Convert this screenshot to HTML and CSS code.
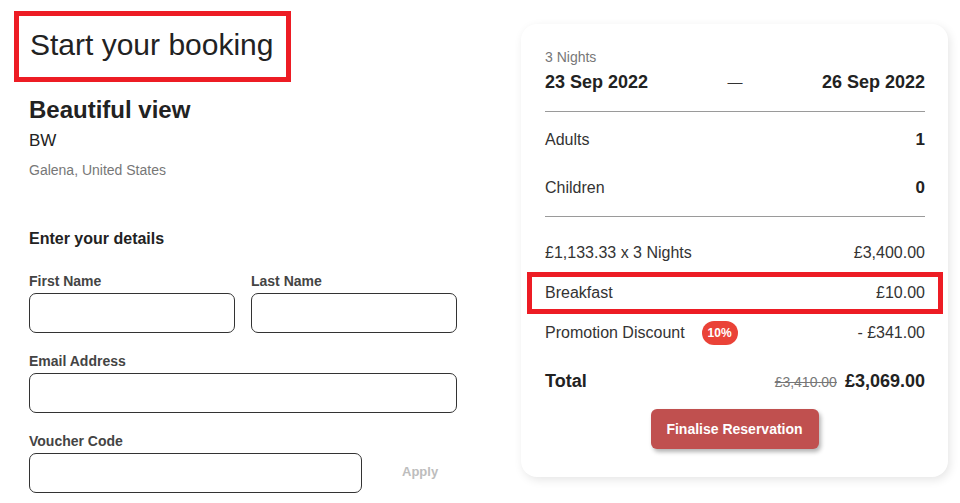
FILE: index.html
```html
<!DOCTYPE html>
<html lang="en">
<head>
<meta charset="utf-8">
<title>Start your booking</title>
<link rel="stylesheet" href="styles.css">
</head>
<body>
<div class="page">
  <div class="left">
    <h1 class="title-box">Start your booking</h1>
    <div class="details">
      <h2 class="prop-name">Beautiful view</h2>
      <div class="prop-code">BW</div>
      <div class="prop-loc">Galena, United States</div>

      <h3 class="section-title">Enter your details</h3>

      <div class="row-2">
        <div class="field">
          <label class="label">First Name</label>
          <input class="input" type="text">
        </div>
        <div class="field">
          <label class="label">Last Name</label>
          <input class="input" type="text">
        </div>
      </div>
      <div class="field">
        <label class="label">Email Address</label>
        <input class="input" type="text">
      </div>
      <div class="field">
        <label class="label">Voucher Code</label>
        <div class="voucher">
          <input class="input voucher-input" type="text">
          <button class="apply" type="button">Apply</button>
        </div>
      </div>
    </div>
  </div>

  <div class="card">
    <div class="nights">3 Nights</div>
    <div class="dates">
      <span>23 Sep 2022</span>
      <span class="dash">—</span>
      <span>26 Sep 2022</span>
    </div>
    <div class="divider"></div>
    <div class="guests">
      <div class="guest-row"><span>Adults</span><span class="strong">1</span></div>
      <div class="guest-row"><span>Children</span><span class="strong">0</span></div>
    </div>
    <div class="divider"></div>
    <div class="prices">
      <div class="price-row"><span>£1,133.33 x 3 Nights</span><span>£3,400.00</span></div>
      <div class="price-row highlight"><span>Breakfast</span><span>£10.00</span></div>
      <div class="price-row"><span class="promo">Promotion Discount <span class="badge">10%</span></span><span>- £341.00</span></div>
      <div class="total-row"><span>Total</span><span class="total-vals"><s class="old">£3,410.00</s><span>£3,069.00</span></span></div>
    </div>
    <div class="actions">
      <button class="finalise" type="button">Finalise Reservation</button>
    </div>
  </div>
</div>
</body>
</html>
```
FILE: styles.css
```css
* { box-sizing: border-box; }
html, body { margin: 0; padding: 0; background: #fff; }
body {
  font-family: "Liberation Sans", Arial, sans-serif;
  color: #222;
  width: 960px;
  height: 503px;
  overflow: hidden;
}
.page {
  display: flex;
  align-items: flex-start;
  padding: 11px 12px 0 14px;
}
.left {
  width: 443px;
  display: flex;
  flex-direction: column;
  align-items: flex-start;
}
.title-box {
  margin: 0;
  display: inline-block;
  border: 5px solid #ed1c24;
  padding: 13px 13px 16px 11px;
  font-size: 30px;
  line-height: 32px;
  font-weight: normal;
  color: #222;
}
.details {
  padding-left: 15px;
  width: 443px;
}
.prop-name {
  margin: 14px 0 0;
  font-size: 24px;
  line-height: 28px;
  font-weight: bold;
  color: #222;
}
.prop-code {
  margin-top: 7px;
  font-size: 17px;
  line-height: 20px;
  color: #222;
}
.prop-loc {
  margin-top: 11px;
  font-size: 14px;
  line-height: 17px;
  color: #777;
}
.section-title {
  margin: 50px 0 0;
  font-size: 16px;
  line-height: 19px;
  font-weight: bold;
  color: #222;
}
.row-2 {
  display: grid;
  grid-template-columns: 1fr 1fr;
  column-gap: 16px;
  margin-top: 25px;
}
.field {
  display: flex;
  flex-direction: column;
  margin-bottom: 20px;
}
.label {
  font-size: 14px;
  line-height: 17px;
  font-weight: bold;
  color: #444;
  margin-bottom: 3px;
}
.input {
  height: 40px;
  width: 100%;
  border: 1px solid #333;
  border-radius: 7px;
  background: #fff;
  font: inherit;
  padding: 0 10px;
}
.voucher {
  display: flex;
  align-items: center;
}
.voucher-input { width: 333px; }
.apply {
  margin: 0 0 3px 40px;
  background: none;
  border: 0;
  padding: 0;
  font-family: inherit;
  font-size: 13px;
  font-weight: bold;
  color: #bdbdbd;
}
.card {
  margin-left: auto;
  margin-top: 13px;
  width: 427px;
  background: #fff;
  border-radius: 16px;
  box-shadow: 2px 3px 10px rgba(0, 0, 0, 0.1);
  padding: 25px 23px 28px 24px;
}
.nights {
  font-size: 14px;
  line-height: 16px;
  color: #777;
}
.dates {
  margin-top: 6px;
  display: flex;
  justify-content: space-between;
  align-items: center;
  font-size: 18px;
  line-height: 22px;
  font-weight: bold;
  color: #222;
}
.dash {
  font-weight: normal;
  font-size: 15px;
  color: #333;
}
.divider {
  height: 1px;
  background: #9a9a9a;
  margin-top: 18px;
}
.guests {
  padding: 4px 0;
}
.guests + .divider { margin-top: 0; }
.guest-row {
  height: 48px;
  display: flex;
  justify-content: space-between;
  align-items: center;
  font-size: 16px;
  color: #333;
}
.strong {
  font-weight: bold;
  font-size: 17px;
  color: #222;
}
.prices { padding-top: 16px; }
.price-row {
  position: relative;
  height: 40px;
  display: flex;
  justify-content: space-between;
  align-items: center;
  font-size: 16px;
  color: #333;
}
.highlight::after {
  content: "";
  position: absolute;
  left: -18px;
  right: -18px;
  top: -1px;
  bottom: -1px;
  border: 5px solid #ed1c24;
}
.promo {
  display: flex;
  align-items: center;
}
.badge {
  display: inline-flex;
  align-items: center;
  justify-content: center;
  margin-left: 17px;
  width: 36px;
  height: 24px;
  border-radius: 12px;
  background: #ea4237;
  color: #fff;
  font-size: 12px;
  font-weight: bold;
}
.total-row {
  margin-top: 8px;
  height: 40px;
  display: flex;
  justify-content: space-between;
  align-items: center;
  font-size: 18px;
  font-weight: bold;
  color: #222;
}
.total-vals {
  display: flex;
  align-items: baseline;
  gap: 8px;
}
.old {
  font-size: 14px;
  font-weight: normal;
  color: #777;
}
.actions {
  display: flex;
  justify-content: center;
  margin-top: 8px;
  padding-right: 1px;
}
.finalise {
  height: 40px;
  width: 168px;
  border: 0;
  border-radius: 6px;
  background: #c0504f;
  color: #fff;
  font-family: inherit;
  font-size: 14px;
  font-weight: bold;
  box-shadow: 2px 3px 4px rgba(0, 0, 0, 0.3);
}
```
